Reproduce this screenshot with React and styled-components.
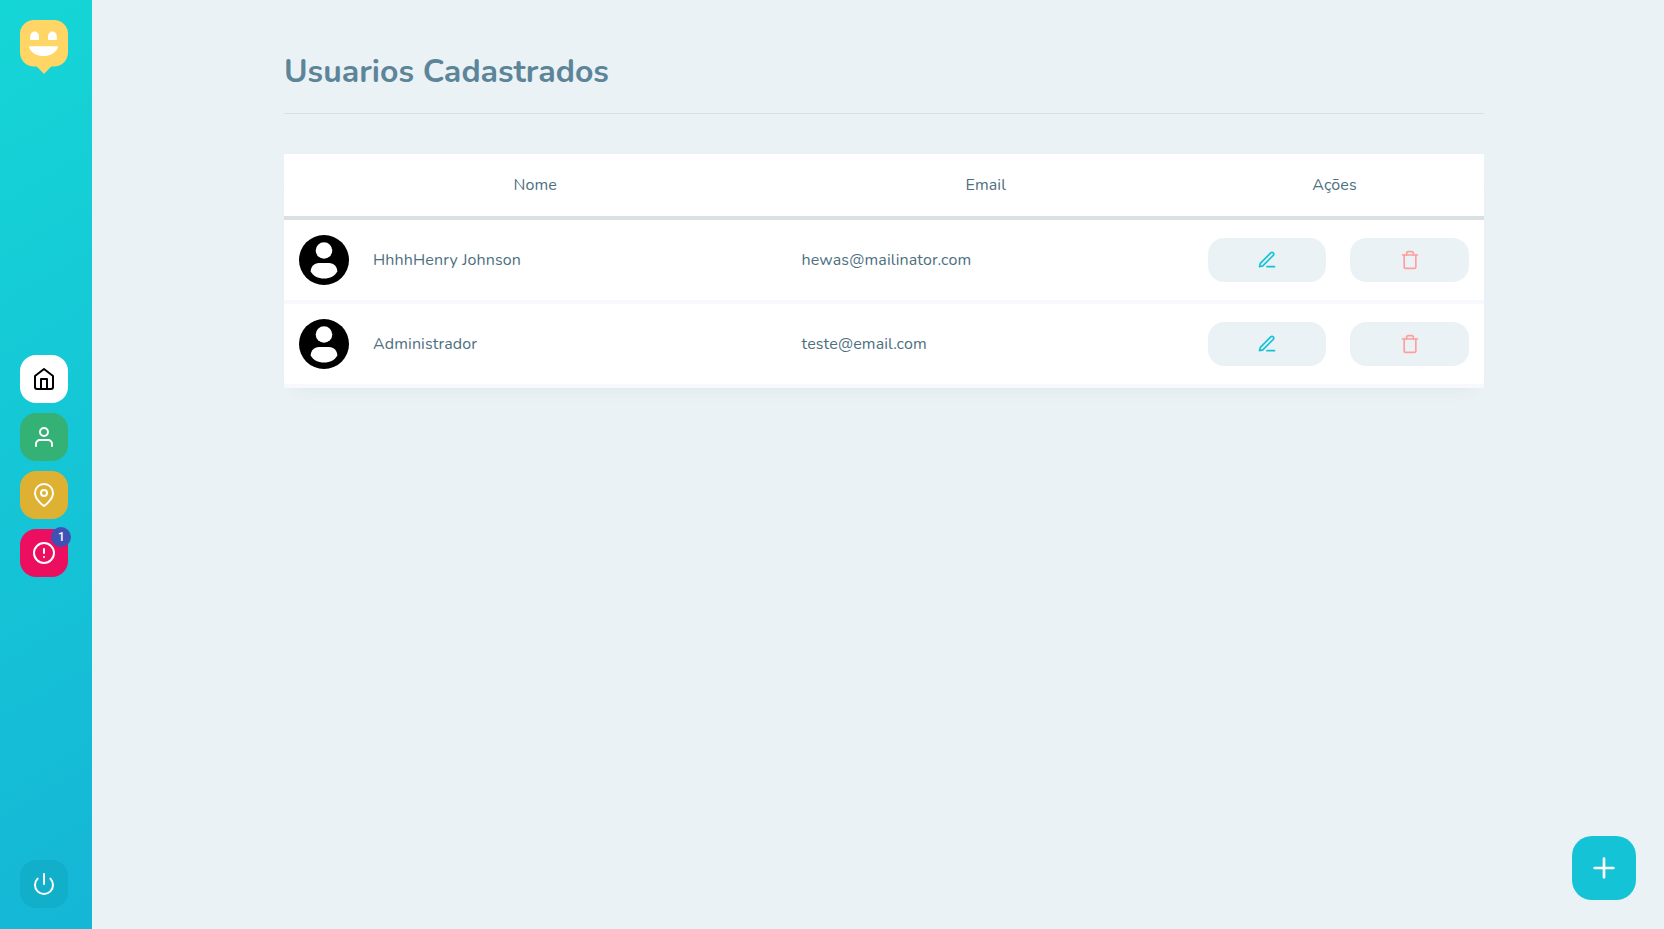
import React from 'react';
import styled, { createGlobalStyle } from 'styled-components';
import {
  FiHome, FiUser, FiMapPin, FiAlertCircle, FiPower, FiEdit3, FiTrash, FiPlus,
} from 'react-icons/fi';

const GlobalStyle = createGlobalStyle`
  * { box-sizing: border-box; margin: 0; padding: 0; }
  body {
    background: #ebf2f5;
    color: #4d6f80;
    font: 400 16px/24px Nunito, Lato, sans-serif;
  }
  button { font: inherit; border: 0; cursor: pointer; }
`;

const Page = styled.div`
  display: flex;
  height: 100vh;
`;

const Sidebar = styled.aside`
  flex: 0 0 92px;
  display: flex;
  flex-direction: column;
  justify-content: space-between;
  padding: 20px 24px 21px 20px;
  background: linear-gradient(329.54deg, #15b6d6 0%, #15d6d6 100%);
`;

const Logo = styled.svg`
  display: block;
  width: 48px;
  height: 55px;
`;

const Nav = styled.nav`
  display: flex;
  flex-direction: column;
  gap: 10px;
  margin-bottom: 3px;
`;

const NavButton = styled.button`
  position: relative;
  display: flex;
  align-items: center;
  justify-content: center;
  width: 48px;
  height: 48px;
  border-radius: 16px;
  color: ${(p) => p.$color || '#fff'};
  background: ${(p) => p.$background};
`;

const Badge = styled.span`
  position: absolute;
  top: -2px;
  right: -3px;
  width: 20px;
  height: 20px;
  padding-left: 1px;
  border-radius: 50%;
  background: #3f51b5;
  color: #fff;
  font: 500 12px/20px Roboto, sans-serif;
  text-align: center;
`;

const Main = styled.main`
  flex: 1;
  padding: 52px 0 0 192px;
`;

const Content = styled.div`
  width: 1200px;
`;

const Title = styled.h1`
  height: 62px;
  margin-bottom: 40px;
  border-bottom: 1px solid #d3e2e5;
  color: #5c8599;
  font-size: 32px;
  font-weight: 700;
  line-height: 40px;
`;

const Table = styled.div`
  background: #fff;
  box-shadow: 0 12px 16px -12px rgba(23, 80, 90, 0.08);
`;

const Row = styled.div`
  display: grid;
  grid-template-columns: 502.5px 398.5px 299px;
  align-items: center;
  height: 84px;
  border-bottom: 4px solid #f7f9fc;
  letter-spacing: 0.14px;
`;

const HeaderRow = styled(Row)`
  height: 66px;
  border-bottom-color: #dae1e5;
  text-align: center;
`;

const Person = styled.div`
  display: flex;
  align-items: center;
  gap: 24px;
  padding-left: 15px;
`;

const Avatar = styled.svg`
  width: 50px;
  height: 50px;
`;

const Email = styled.div`
  padding-left: 15px;
`;

const Actions = styled.div`
  display: grid;
  grid-template-columns: 118px 119px;
  gap: 24px;
  padding-left: 23px;
`;

const ActionButton = styled.button`
  display: flex;
  align-items: center;
  justify-content: center;
  height: 44px;
  border-radius: 16px;
  background: #ebf2f5;
  color: ${(p) => p.$color};
`;

const AddButton = styled.button`
  position: fixed;
  right: 28px;
  bottom: 29px;
  display: flex;
  align-items: center;
  justify-content: center;
  width: 64px;
  height: 64px;
  border-radius: 20px;
  background: #15c3d6;
  color: #fff;
`;

const users = [
  { name: 'HhhhHenry Johnson', email: 'hewas@mailinator.com' },
  { name: 'Administrador', email: 'teste@email.com' },
];

function HappyLogo() {
  return (
    <Logo viewBox="0 0 48 55">
      <path
        fill="#ffd666"
        d="M14 0h20a14 14 0 0 1 14 14v18.500a14 14 0 0 1-14 14h-1.500c-1 0-1.600.4-2.300 1.100L24 54l-6.200-6.400c-.7-.7-1.300-1.100-2.300-1.100H14a14 14 0 0 1-14-14V14A14 14 0 0 1 14 0z"
      />
      <path fill="#fff" d="M10.200 20v-3.600a4.400 4.800 0 0 1 8.800 0V20zM28 20v-3.600a4.400 4.800 0 0 1 8.800 0V20z" />
      <path fill="#fff" d="M10 26.300h27c.9 0 1.200.6.800 1.400C35.400 33 30 36 23.500 36S11.600 33 9.200 27.700c-.4-.8-.1-1.400.8-1.400z" />
    </Logo>
  );
}

function UserAvatar() {
  return (
    <Avatar viewBox="0 0 50 50">
      <circle cx="25" cy="25" r="25" fill="#000" />
      <circle cx="25" cy="15.500" r="8.300" fill="#fff" />
      <path
        fill="#fff"
        d="M20 27.900h10c5 0 8.300 3.600 8.300 8.600C36 41 31 43.600 25 43.600S14 41 11.700 36.500c0-5 3.300-8.600 8.300-8.600z"
      />
    </Avatar>
  );
}

export default function App() {
  return (
    <>
      <GlobalStyle />
      <Page>
        <Sidebar>
          <HappyLogo />
          <Nav>
            <NavButton $background="#fff" $color="#000"><FiHome size={24} /></NavButton>
            <NavButton $background="#34b175"><FiUser size={24} /></NavButton>
            <NavButton $background="#dfb132"><FiMapPin size={24} /></NavButton>
            <NavButton $background="#ec0e5f">
              <FiAlertCircle size={24} />
              <Badge>1</Badge>
            </NavButton>
          </Nav>
          <NavButton $background="#12afcb"><FiPower size={24} /></NavButton>
        </Sidebar>
        <Main>
          <Content>
            <Title>Usuarios Cadastrados</Title>
            <Table>
              <HeaderRow>
                <span>Nome</span>
                <span>Email</span>
                <span>Ações</span>
              </HeaderRow>
              {users.map((user) => (
                <Row key={user.email}>
                  <Person>
                    <UserAvatar />
                    <span>{user.name}</span>
                  </Person>
                  <Email>{user.email}</Email>
                  <Actions>
                    <ActionButton $color="#15c3d6"><FiEdit3 size={20} /></ActionButton>
                    <ActionButton $color="#ff9e9e"><FiTrash size={20} /></ActionButton>
                  </Actions>
                </Row>
              ))}
            </Table>
          </Content>
        </Main>
        <AddButton><FiPlus size={32} /></AddButton>
      </Page>
    </>
  );
}
